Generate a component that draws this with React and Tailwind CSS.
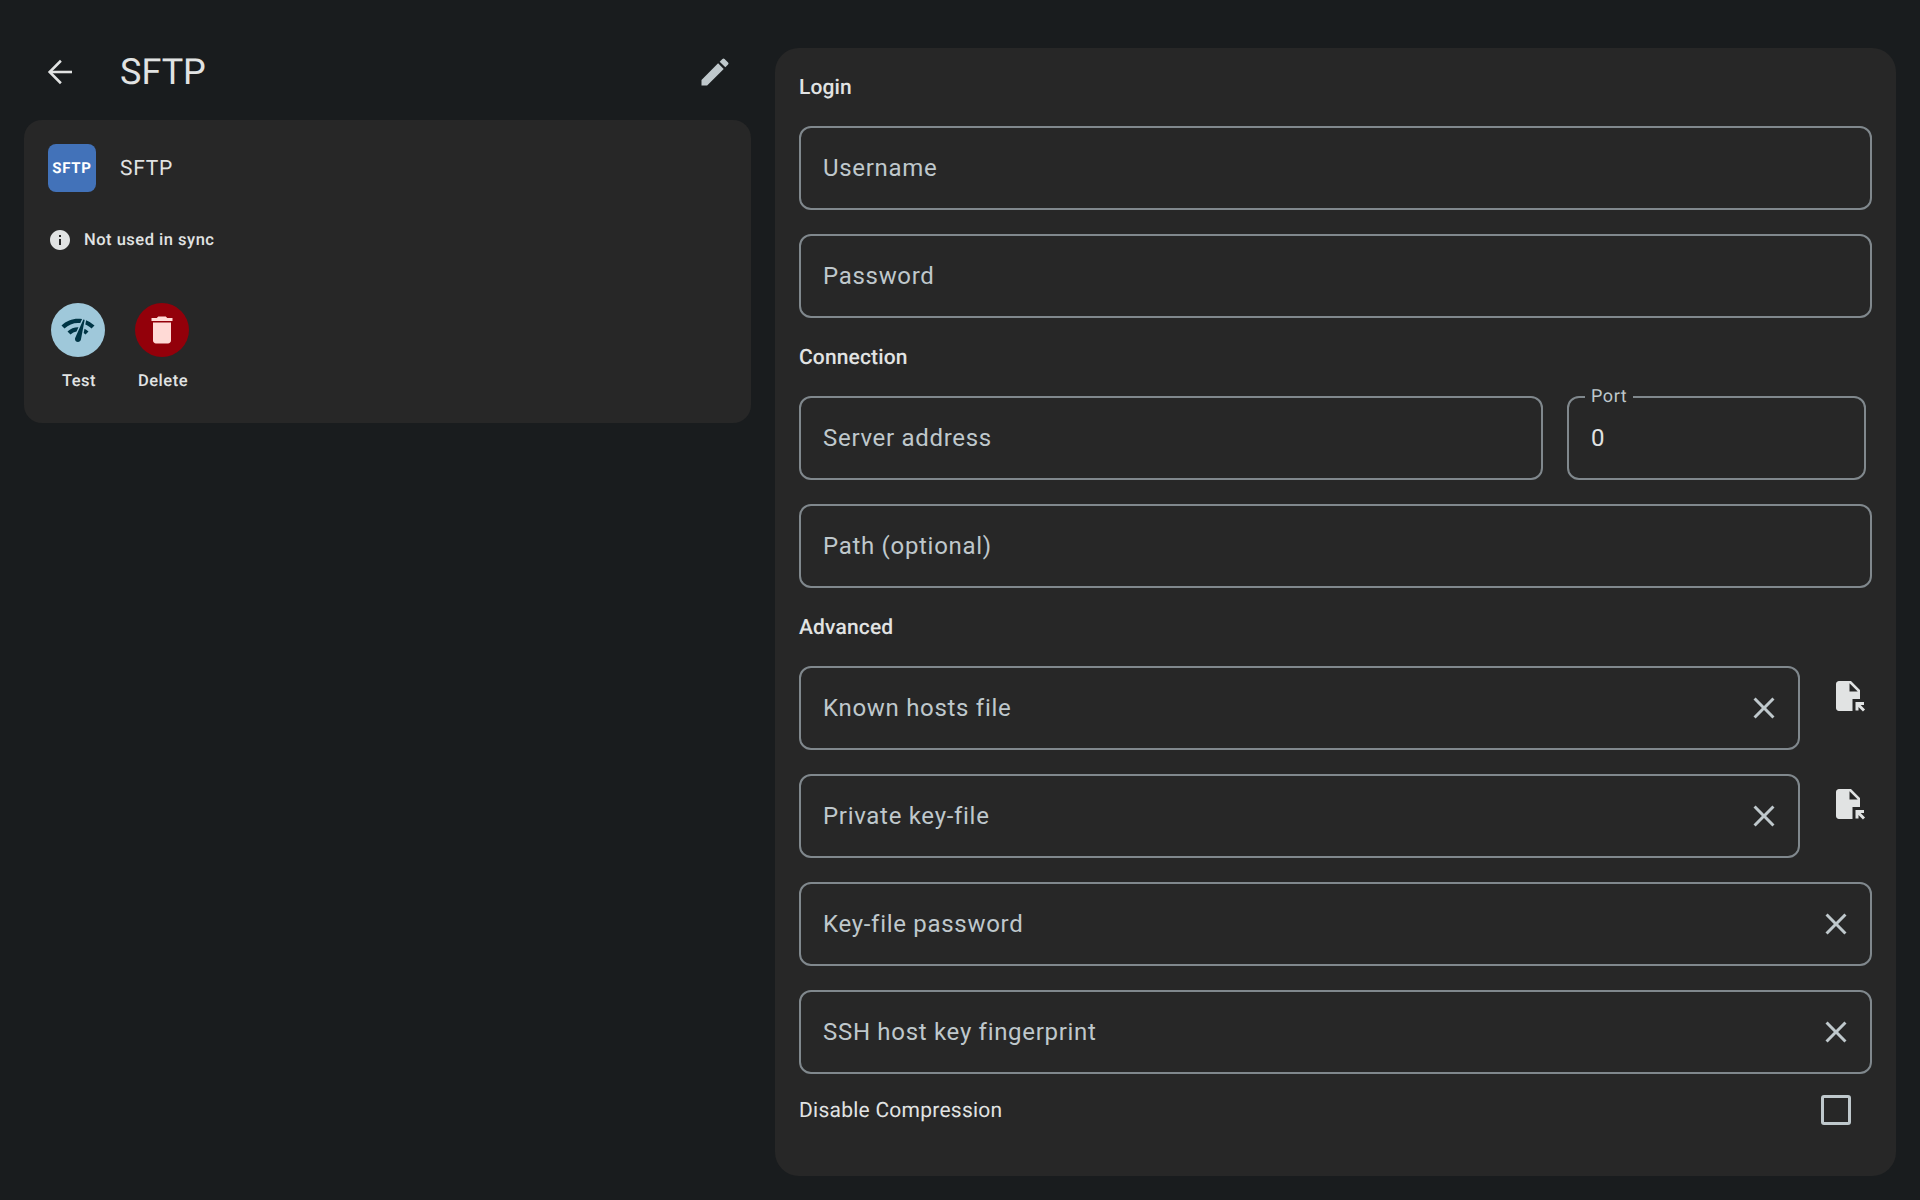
import React from "react";
import { MdEdit, MdInfo, MdNetworkCheck, MdDelete, MdClose, MdFileOpen } from "react-icons/md";

function SectionLabel({ children }) {
  return <div className="h-[30px] text-[21px] leading-[32px] font-medium tracking-[0.15px] text-[#e1e3e3]">{children}</div>;
}

function Field({ placeholder, value, label, clearable, className = "" }) {
  return (
    <div className={"relative flex h-[84px] items-center rounded-[12px] border-2 border-[#80888d] pl-[22px] " + className}>
      {label && (
        <span className="absolute left-[16px] top-[-12px] bg-[#272727] px-[6px] text-[18px] leading-[21px] tracking-[0.6px] text-[#bfc8cc]">{label}</span>
      )}
      <input
        readOnly
        value={value}
        placeholder={placeholder}
        className="min-w-0 flex-1 bg-transparent text-[24px] tracking-[0.7px] text-[#e1e3e3] outline-none placeholder:text-[#bfc8cc]"
      />
      {clearable && (
        <span className="mr-[16px] flex h-[36px] w-[36px] shrink-0 items-center justify-center text-[#bfc8cc]">
          <MdClose size={36} />
        </span>
      )}
    </div>
  );
}

function FileRow({ placeholder }) {
  return (
    <div className="flex items-start">
      <Field placeholder={placeholder} clearable className="w-[1001px]" />
      <span className="ml-[30px] mt-[12px] flex h-[36px] w-[36px] items-center justify-center text-[#e1e3e3]">
        <MdFileOpen size={36} />
      </span>
    </div>
  );
}

function Action({ label, bg, fg, children }) {
  return (
    <div className="flex w-[54px] flex-col items-center">
      <span className={"flex h-[54px] w-[54px] items-center justify-center rounded-full " + bg + " " + fg}>{children}</span>
      <span className="ml-[2px] mt-[14px] whitespace-nowrap text-[16.5px] leading-[22px] font-medium tracking-[0.5px] text-[#e1e3e3]">{label}</span>
    </div>
  );
}

export default function App() {
  return (
    <div className="flex min-h-[1200px] gap-[24px] bg-[#191c1e] px-[24px] pb-[24px] pt-[24px] font-['Roboto',sans-serif] antialiased [text-rendering:geometricPrecision]">
      <div className="w-[727px] shrink-0">
        <header className="flex h-[96px] items-center px-[18px]">
          <svg width="36" height="36" viewBox="0 0 24 24" fill="none" stroke="currentColor" strokeWidth="1.7" className="shrink-0 text-[#e1e3e3]">
            <path d="M20 12H5.2" />
            <path d="M12.6 4.5 5.1 12l7.5 7.5" />
          </svg>
          <h1 className="ml-[42px] flex-1 text-[36px] font-normal leading-[48px] text-[#e1e3e3]">SFTP</h1>
          <MdEdit size={36} className="shrink-0 text-[#bfc8cc]" />
        </header>
        <section className="h-[303px] rounded-[18px] bg-[#272727] px-[24px] pt-[24px]">
          <div className="flex items-center">
            <div className="flex h-[48px] w-[48px] items-center justify-center rounded-[8px] bg-[#4272b9] text-[15px] font-bold tracking-[0.75px] text-white">SFTP</div>
            <div className="ml-[24px] mt-[4px] text-[21px] tracking-[0.75px] text-[#e1e3e3]">SFTP</div>
          </div>
          <div className="mt-[36px] flex items-center">
            <MdInfo size={24} className="shrink-0 text-[#e1e3e3]" />
            <span className="ml-[12px] h-[24px] text-[16.5px] font-medium leading-[26px] tracking-[0.5px] text-[#e1e3e3]">Not used in sync</span>
          </div>
          <div className="mt-[51px] flex gap-[30px] pl-[3px]">
            <Action label="Test" bg="bg-[#9fc8da]" fg="text-[#003545]">
              <MdNetworkCheck size={36} />
            </Action>
            <Action label="Delete" bg="bg-[#93000a]" fg="text-[#ffdad6]">
              <MdDelete size={36} />
            </Action>
          </div>
        </section>
      </div>

      <main className="mt-[24px] flex h-[1128px] w-[1121px] shrink-0 flex-col gap-[24px] rounded-[24px] bg-[#272727] px-[24px] pt-[24px]">
        <SectionLabel>Login</SectionLabel>
        <Field placeholder="Username" />
        <Field placeholder="Password" />
        <SectionLabel>Connection</SectionLabel>
        <div className="flex gap-[24px]">
          <Field placeholder="Server address" className="w-[744px]" />
          <Field label="Port" value="0" className="w-[299px]" />
        </div>
        <Field placeholder="Path (optional)" />
        <SectionLabel>Advanced</SectionLabel>
        <FileRow placeholder="Known hosts file" />
        <FileRow placeholder="Private key-file" />
        <Field placeholder="Key-file password" clearable />
        <Field placeholder="SSH host key fingerprint" clearable />
        <div className="mt-[-24px] flex h-[72px] items-center justify-between pr-[21px]">
          <span className="mt-[4px] text-[21px] tracking-[0.25px] text-[#e1e3e3]">Disable Compression</span>
          <span className="h-[30px] w-[30px] rounded-[3px] border-[3px] border-[#bfc8cc]" />
        </div>
      </main>
    </div>
  );
}
